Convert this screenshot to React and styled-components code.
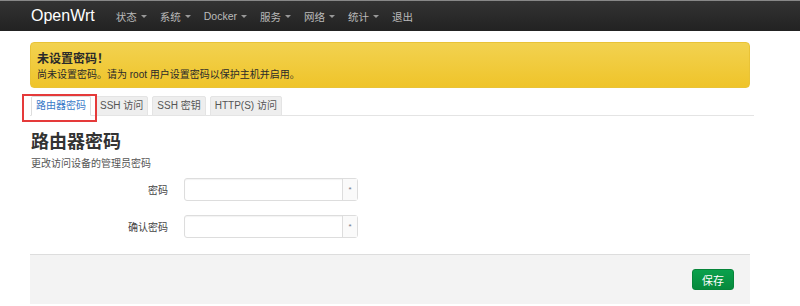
import React from "react";
import styled, { createGlobalStyle } from "styled-components";

const GlobalStyle = createGlobalStyle`
  body {
    margin: 0;
    background: #fff;
    font-family: "Liberation Sans", "Noto Sans CJK SC", sans-serif;
    color: #404040;
  }
`;

const Navbar = styled.div`
  height: 31px;
  background: linear-gradient(#333 0%, #222 100%);
  border-top: 1px solid #888;
  box-sizing: border-box;
  display: flex;
  align-items: center;
  padding-left: 31px;
`;

const Brand = styled.div`
  color: #fff;
  font-size: 16px;
  margin-right: 21px;
`;

const NavItem = styled.div`
  color: #bbb;
  font-size: 10.5px;
  margin-right: 13px;
  display: flex;
  align-items: center;

  &::after {
    content: "";
    display: ${(p) => (p.$drop ? "block" : "none")};
    margin-left: 4px;
    border-left: 3px solid transparent;
    border-right: 3px solid transparent;
    border-top: 3px solid #999;
  }
`;

const Container = styled.div`
  margin: 0 50px 0 30px;
  padding-top: 11px;
`;

const Alert = styled.div`
  height: 46px;
  box-sizing: border-box;
  background: linear-gradient(#f2d250, #efc42a);
  border: 1px solid #e9c337;
  border-radius: 4px;
  padding: 8px 6px 0;
  color: #2a2a2a;
`;

const AlertTitle = styled.div`
  font-size: 12px;
  font-weight: bold;
  line-height: 16px;
`;

const AlertText = styled.div`
  font-size: 10px;
  line-height: 15px;
`;

const Tabs = styled.div`
  position: relative;
  margin-top: 8px;
  display: flex;
  border-bottom: 1px solid #e4e4e4;
  margin-right: -4px;
  padding-left: 1px;
`;

const Tab = styled.div`
  height: 18px;
  line-height: 18px;
  padding: 0 4px;
  font-size: 10px;
  margin-right: 4px;
  margin-bottom: -1px;
  border: 1px solid ${(p) => (p.$active ? "#ddd" : "#e4e4e4")};
  border-bottom-color: ${(p) => (p.$active ? "#fff" : "#e4e4e4")};
  background: ${(p) => (p.$active ? "#fff" : "#eee")};
  color: ${(p) => (p.$active ? "#3a7bc8" : "#555")};
  border-radius: 2px 2px 0 0;
`;

const Marker = styled.div`
  position: absolute;
  left: -8px;
  top: -2px;
  width: 75px;
  height: 28px;
  border: 2px solid #e53a3a;
  box-sizing: border-box;
  pointer-events: none;
`;

const Heading = styled.h2`
  margin: 14px 0 0 1px;
  font-size: 18px;
  line-height: 24px;
  font-weight: bold;
  color: #333;
`;

const Desc = styled.div`
  font-size: 10px;
  color: #555;
  line-height: 14px;
  margin: 3px 0 0 1px;
`;

const Form = styled.div`
  margin-top: 7px;
  display: flex;
  flex-direction: column;
  gap: 14px;
`;

const Row = styled.div`
  display: grid;
  grid-template-columns: 138px 174px;
  column-gap: 16px;
  align-items: center;
`;

const Label = styled.div`
  text-align: right;
  font-size: 10px;
  color: #444;
`;

const InputGroup = styled.div`
  display: flex;
  height: 23px;
  border: 1px solid #ddd;
  border-radius: 3px;
  box-sizing: border-box;
  box-shadow: inset 0 1px 1px rgba(0, 0, 0, 0.05);
`;

const Input = styled.div`
  flex: 1;
`;

const Addon = styled.div`
  width: 14px;
  border-left: 1px solid #ddd;
  background: #fafafa;
  display: flex;
  align-items: center;
  justify-content: center;
  font-size: 8px;
  color: #778;
`;

const Footer = styled.div`
  margin-top: 16px;
  height: 49px;
  background: #f3f3f3;
  border-top: 1px solid #ddd;
  display: flex;
  align-items: center;
  justify-content: flex-end;
  padding-right: 16px;
`;

const SaveButton = styled.button`
  width: 42px;
  height: 21px;
  border: 1px solid #07853a;
  border-radius: 3px;
  background: linear-gradient(#0aa14c, #078a3d);
  color: #fff;
  font-family: inherit;
  font-size: 11px;
  padding: 0;
`;

export default function App() {
  return (
    <>
      <GlobalStyle />
      <Navbar>
        <Brand>OpenWrt</Brand>
        <NavItem $drop>状态</NavItem>
        <NavItem $drop>系统</NavItem>
        <NavItem $drop>Docker</NavItem>
        <NavItem $drop>服务</NavItem>
        <NavItem $drop>网络</NavItem>
        <NavItem $drop>统计</NavItem>
        <NavItem>退出</NavItem>
      </Navbar>
      <Container>
        <Alert>
          <AlertTitle>未设置密码！</AlertTitle>
          <AlertText>尚未设置密码。请为 root 用户设置密码以保护主机并启用。</AlertText>
        </Alert>
        <Tabs>
          <Tab $active>路由器密码</Tab>
          <Tab>SSH 访问</Tab>
          <Tab>SSH 密钥</Tab>
          <Tab>HTTP(S) 访问</Tab>
          <Marker />
        </Tabs>
        <Heading>路由器密码</Heading>
        <Desc>更改访问设备的管理员密码</Desc>
        <Form>
          <Row>
            <Label>密码</Label>
            <InputGroup>
              <Input />
              <Addon>*</Addon>
            </InputGroup>
          </Row>
          <Row>
            <Label>确认密码</Label>
            <InputGroup>
              <Input />
              <Addon>*</Addon>
            </InputGroup>
          </Row>
        </Form>
        <Footer>
          <SaveButton>保存</SaveButton>
        </Footer>
      </Container>
    </>
  );
}
